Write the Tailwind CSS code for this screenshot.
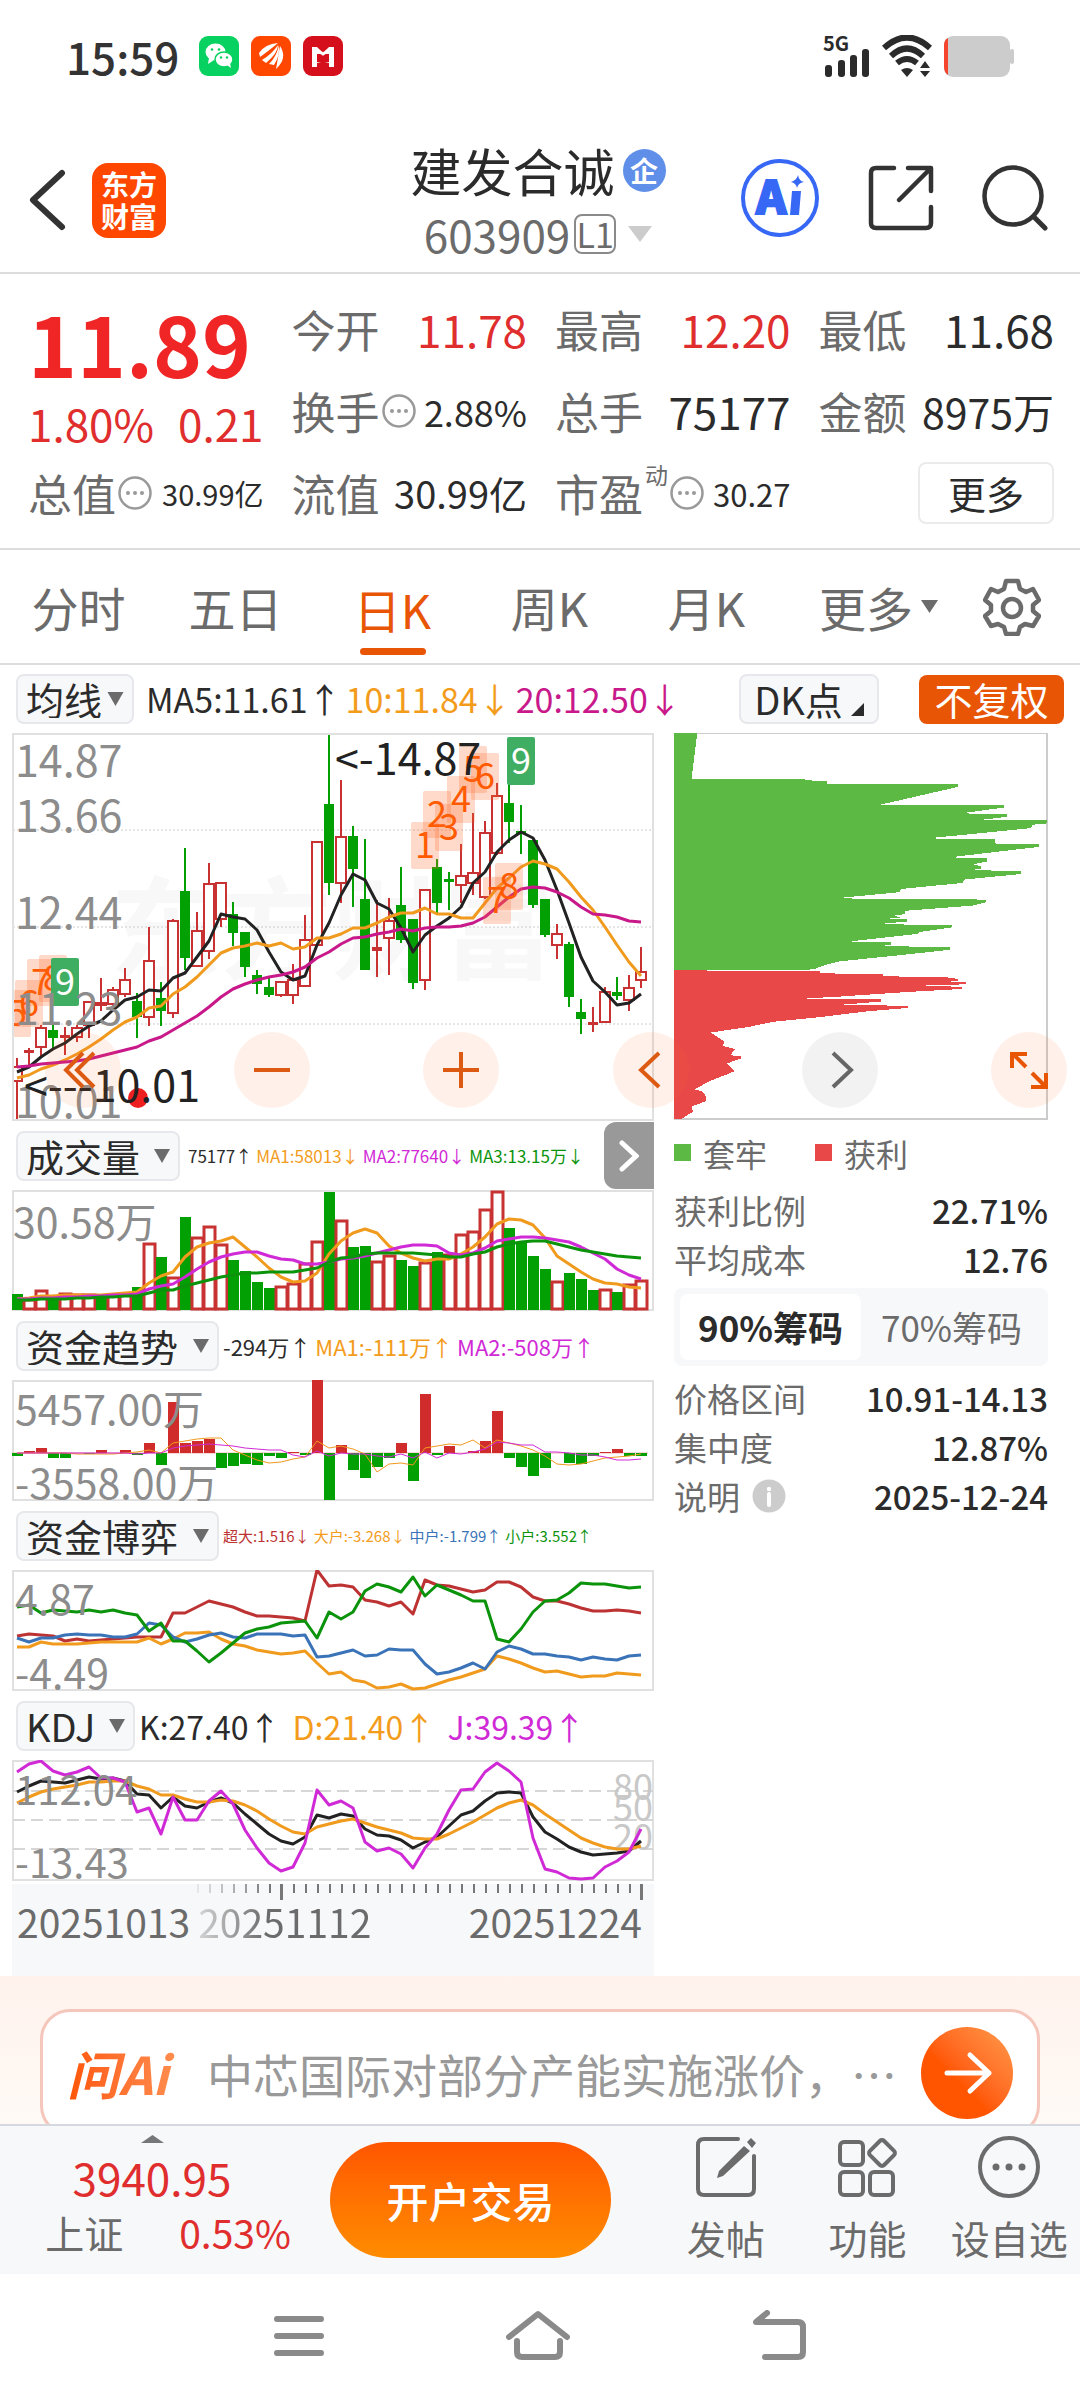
<!DOCTYPE html>
<html lang="zh-CN">
<head>
    <meta charset="UTF-8">
    <meta name="viewport" content="width=device-width, initial-scale=1.0">
    <title>建发合诚 603909</title>
    <script src="https://cdn.jsdelivr.net/npm/@tailwindcss/browser@4"></script>
</head>
<body class="bg-white text-[#2b2b2b] font-['Noto_Sans_CJK_SC',sans-serif] leading-none flex flex-col min-h-screen overflow-x-hidden">

    <!-- Status bar -->
    <div class="flex items-center justify-between h-[112px] px-[66px]">
        <div class="flex items-center gap-3">
            <span class="text-[44px] font-medium mr-2 text-[#333]">15:59</span>
            <svg class="w-10 h-10" viewBox="0 0 40 40">
                <rect width="40" height="40" rx="9" fill="#07d160"/>
                <ellipse cx="16.500" cy="16" rx="10" ry="8.500" fill="#fff"/>
                <path d="M10 22l-1 6 6-4z" fill="#fff"/>
                <ellipse cx="25" cy="23.500" rx="9" ry="7.500" fill="#fff" stroke="#07d160" stroke-width="1.500"/>
                <path d="M28 29l4 3-1-5z" fill="#fff"/>
                <g fill="#07d160"><circle cx="13" cy="13.500" r="1.300"/><circle cx="20" cy="13.500" r="1.300"/><circle cx="22" cy="21.500" r="1.200"/><circle cx="28" cy="21.500" r="1.200"/></g>
            </svg>
            <svg class="w-10 h-10" viewBox="0 0 40 40">
                <rect width="40" height="40" rx="9" fill="#ff4700"/>
                <path d="M8 17Q14 8 27 7 20 13 9 21zM11 24Q21 18 27 9 27 17 15 27zM18 28Q26 20 28 9 29 20 23 29zM25 33Q27 22 29 10 37 22 25 33z" fill="#fff"/>
            </svg>
            <svg class="w-10 h-10" viewBox="0 0 40 40">
                <rect width="40" height="40" rx="9" fill="#d5101c"/>
                <path d="M9 11h5l4 4v11l-4 1v4H9zM31 11h-5l-4 4v11l4 1v4h5z" fill="#fff"/>
                <path d="M14 18v8h12v-8" fill="#d5101c"/>
                <path d="M14 14l6 4 6-4" fill="none" stroke="#fff" stroke-width="3"/>
            </svg>
        </div>
        <div class="flex items-center gap-3">
            <svg class="w-[47px] h-[42px] overflow-visible" viewBox="0 0 47 42">
                <text x="0" y="16" font-size="20" font-weight="700" fill="#2b2b2b">5G</text>
                <g fill="#2b2b2b"><rect x="2" y="30" width="7" height="12" rx="3"/><rect x="15" y="25" width="7" height="17" rx="3"/><rect x="27" y="20" width="7" height="22" rx="3"/><rect x="39" y="14" width="7" height="28" rx="3"/></g>
            </svg>
            <svg class="w-[50px] h-[42px]" viewBox="0 0 50 42">
                <g fill="none" stroke="#2b2b2b" stroke-width="6">
                    <path d="M2 13Q25-8 48 13"/><path d="M9 21Q25 6 41 21"/><path d="M15 28Q25 20 35 28"/>
                </g>
                <path d="M19 35q6-4 12 0l-6 7zM38 33l5-7 5 7zM38 36h10l-5 6z" fill="#2b2b2b"/>
            </svg>
            <svg class="w-[70px] h-[41px]" viewBox="0 0 70 41">
                <rect width="66" height="41" rx="9" fill="#ccc"/><rect x="66" y="13" width="4" height="15" rx="2" fill="#ccc"/>
                <path d="M4 2v37Q0 36 0 31V9Q0 4 4 2z" fill="#f5452f"/>
            </svg>
        </div>
    </div>

    <!-- Title bar -->
    <header class="grid grid-cols-[1fr_auto_1fr] items-center h-[162px] pl-7 pr-8 border-b-2 border-[#dcdcdc]">
        <div class="flex items-center gap-6 pb-3 pt-7">
            <button aria-label="返回">
                <svg class="w-10 h-[62px]" viewBox="0 0 40 62"><path d="M34 4L5 31l29 27" fill="none" stroke="#333" stroke-width="6" stroke-linecap="round" stroke-linejoin="round"/></svg>
            </button>
            <a href="#" class="w-[74px] h-[75px] rounded-2xl bg-[#ff4700] text-white font-bold text-[28px] leading-[32px] text-center pt-[5px]">东方<br>财富</a>
        </div>
        <div class="flex flex-col items-center gap-4 pt-4">
            <div class="flex items-center gap-2">
                <h1 class="text-[51px]">建发合诚</h1>
                <span class="size-[43px] rounded-full bg-[#5f8fe8] text-white font-bold text-[28px] flex items-center justify-center">企</span>
            </div>
            <div class="flex items-center gap-1 text-[44px] text-[#6b6b6b]">
                <span>603909</span>
                <span class="border-2 border-[#8a8a8a] rounded-lg w-[42px] h-10 text-[34px] flex items-center justify-center">L1</span>
                <svg class="w-6 h-4 ml-2" viewBox="0 0 24 16"><path d="M0 0h24L12 16z" fill="#ccc"/></svg>
            </div>
        </div>
        <div class="flex items-center justify-end gap-12 pt-3">
            <a href="#" aria-label="Ai">
                <svg class="size-[80px]" viewBox="0 0 80 80">
                    <circle cx="40" cy="40" r="37" fill="none" stroke="#3768f5" stroke-width="4"/>
                    <text x="16" y="56" font-size="46" font-weight="900" fill="#3768f5" stroke="#3768f5" stroke-width="2">A</text>
                    <path d="M52 33h9l-2 24h-9zM58 17q1 6 6 7-6 1-7 6-1-5-6-6 6-2 7-7z" fill="#3768f5"/>
                </svg>
            </a>
            <button aria-label="分享">
                <svg class="size-[66px]" viewBox="0 0 66 66"><path d="M26 3H8Q3 3 3 8v50q0 5 5 5h50q5 0 5-5V42M40 3h23v23M62 4L31 35" fill="none" stroke="#333" stroke-width="4.500" stroke-linecap="round" stroke-linejoin="round"/></svg>
            </button>
            <button aria-label="搜索">
                <svg class="size-[66px]" viewBox="0 0 66 66"><circle cx="31" cy="31" r="28.500" fill="none" stroke="#333" stroke-width="4.500"/><path d="M52 52l11 11" stroke="#333" stroke-width="5" stroke-linecap="round"/></svg>
            </button>
        </div>
    </header>

    <!-- Quote -->
    <section class="grid grid-cols-4 auto-rows-[82px] gap-x-7 pl-7 pr-[26px] pt-[14px] pb-[14px] border-b-2 border-[#dcdcdc] text-[44px] text-[#6b6b6b]">
        <div class="row-span-2 text-[#e02d2d]">
            <div class="h-[108px] flex items-center text-[83px] font-bold text-[#f02626]">11.89</div>
            <div class="h-[54px] flex items-center justify-between"><span>1.80%</span><span>0.21</span></div>
        </div>
        <div class="flex items-center justify-between">今开<span class="text-[#e02d2d]">11.78</span></div>
        <div class="flex items-center justify-between">最高<span class="text-[#e02d2d]">12.20</span></div>
        <div class="flex items-center justify-between">最低<span class="text-[#2b2b2b]">11.68</span></div>
        <div class="flex items-center justify-between whitespace-nowrap">
            <span class="flex items-center gap-[2px]">换手<svg class="size-[34px]" viewBox="0 0 34 34"><use href="#dots"/></svg></span>
            <span class="text-[36px] text-[#2b2b2b]">2.88%</span>
        </div>
        <div class="flex items-center justify-between">总手<span class="text-[#2b2b2b]">75177</span></div>
        <div class="flex items-center justify-between">金额<span class="text-[41px] text-[#2b2b2b]">8975万</span></div>
        <div class="flex items-center justify-between whitespace-nowrap">
            <span class="flex items-center gap-[2px]">总值<svg class="size-[34px]" viewBox="0 0 34 34"><use href="#dots"/></svg></span>
            <span class="text-[29px] text-[#2b2b2b]">30.99亿</span>
        </div>
        <div class="flex items-center justify-between">流值<span class="text-[38px] text-[#2b2b2b]">30.99亿</span></div>
        <div class="flex items-center justify-between whitespace-nowrap">
            <span class="flex items-center gap-[2px]">市盈<span class="text-[23px] self-start -mt-2">动</span><svg class="size-[34px]" viewBox="0 0 34 34"><use href="#dots"/></svg></span>
            <span class="text-[31px] text-[#2b2b2b]">30.27</span>
        </div>
        <div class="flex items-center justify-end">
            <button class="w-[136px] h-[62px] border-2 border-[#ebebeb] rounded-lg text-[38px] text-[#2b2b2b]">更多</button>
        </div>
    </section>

    <!-- Period tabs -->
    <nav class="grid grid-cols-[repeat(5,157fr)_187fr_80fr] h-[115px] pr-7 border-b-2 border-[#dcdcdc] text-[47px] text-[#6b6b6b]">
        <a href="#" class="flex items-center justify-center">分时</a>
        <a href="#" class="flex items-center justify-center">五日</a>
        <a href="#" class="flex flex-col items-center justify-end gap-4 pb-2 text-[#e85505]">日K<span class="w-[66px] h-[7px] rounded-full bg-[#e85505]"></span></a>
        <a href="#" class="flex items-center justify-center">周K</a>
        <a href="#" class="flex items-center justify-center">月K</a>
        <button class="flex items-center justify-center gap-2">更多<svg class="w-[17px] h-[13px]" viewBox="0 0 17 13"><path d="M0 0h17L8.500 13z" fill="#6b6b6b"/></svg></button>
        <button class="flex items-center justify-center" aria-label="设置">
            <svg class="size-[58px]" viewBox="0 0 58 58" fill="none" stroke="#6b6b6b" stroke-width="4.500" stroke-linejoin="round">
                <path d="M23 3h12l2 8 6 3 7-3 6 11-6 5v6l6 5-6 10-8-2-5 3-2 7H23l-2-7-6-3-7 2-6-10 6-5v-6l-6-5 6-11 7 3 6-3z"/><circle cx="29" cy="30" r="9"/>
            </svg>
        </button>
    </nav>

    <!-- Indicator toolbar -->
    <div class="flex items-center justify-between h-[68px] px-4">
        <div class="flex items-center text-[34px] whitespace-nowrap">
            <label class="flex items-center h-[50px] w-[118px] pl-2 border-2 border-[#e6e8ec] rounded-lg bg-[#f7f8fa] mr-3">
                <select class="appearance-none text-[38px]" aria-label="主图指标"><option>均线</option></select>
                <svg class="w-[17px] h-[14px] ml-1" viewBox="0 0 16 14"><path d="M0 0h16L8 14z" fill="#6b6b6b"/></svg>
            </label>
            <span class="mr-1">MA5:11.61↑</span>
            <span class="mr-1 text-[#f39c1c]">10:11.84↓</span>
            <span class="text-[#c8188a]">20:12.50↓</span>
        </div>
        <div class="flex items-center gap-10">
            <button class="flex items-center justify-center gap-2 w-[140px] h-[50px] border-2 border-[#e6e8ec] rounded-lg bg-[#f7f8fa] text-[38px]">DK点<svg class="w-[13px] h-[13px] mt-5" viewBox="0 0 13 13"><path d="M13 0v13H0z" fill="#2b2b2b"/></svg></button>
            <button class="w-[145px] h-[49px] rounded-lg bg-[#e85505] text-white text-[38px]">不复权</button>
        </div>
    </div>

    <!-- Charts -->
    <main class="relative grid grid-cols-[minmax(0,642fr)_minmax(0,374fr)] gap-x-5 pl-3 pr-8">
        <div>
            <svg id="kline" class="block w-full" viewBox="0 0 642 388"></svg>

            <div class="flex items-center justify-between h-[69px]">
                <div class="flex items-center gap-2 pl-1 whitespace-nowrap">
                    <label class="flex items-center justify-between h-[50px] w-[164px] px-2 border-2 border-[#e6e8ec] rounded-lg bg-[#f7f8fa]">
                        <select class="appearance-none text-[38px]" aria-label="副图一"><option>成交量</option></select>
                        <svg class="w-4 h-[14px]" viewBox="0 0 16 14"><path d="M0 0h16L8 14z" fill="#6b6b6b"/></svg>
                    </label>
                    <p class="flex gap-1 text-[17px]">
                        <span>75177↑</span><span class="text-[#f39c1c]">MA1:58013↓</span><span class="text-[#d02ad6]">MA2:77640↓</span><span class="text-[#0c930c]">MA3:13.15万↓</span>
                    </p>
                </div>
                <button class="shrink-0 w-[50px] h-[67px] rounded-l-xl bg-[#999] flex items-center justify-center" aria-label="展开">
                    <svg class="w-5 h-8" viewBox="0 0 20 32"><path d="M3 3l14 13L3 29" fill="none" stroke="#fff" stroke-width="5" stroke-linecap="round"/></svg>
                </button>
            </div>
            <svg id="volume" class="block w-full" viewBox="0 0 642 121"></svg>

            <div class="flex items-center gap-1 pl-1 h-[69px] whitespace-nowrap">
                <label class="flex items-center justify-between h-[50px] w-[203px] px-2 border-2 border-[#e6e8ec] rounded-lg bg-[#f7f8fa]">
                    <select class="appearance-none text-[38px]" aria-label="副图二"><option>资金趋势</option></select>
                    <svg class="w-4 h-[14px]" viewBox="0 0 16 14"><path d="M0 0h16L8 14z" fill="#6b6b6b"/></svg>
                </label>
                <p class="flex gap-1 text-[22px]">
                    <span>-294万↑</span><span class="text-[#f39c1c]">MA1:-111万↑</span><span class="text-[#d02ad6]">MA2:-508万↑</span>
                </p>
            </div>
            <svg id="trend" class="block w-full" viewBox="0 0 642 121"></svg>

            <div class="flex items-center gap-1 pl-1 h-[69px] whitespace-nowrap">
                <label class="flex items-center justify-between h-[50px] w-[203px] px-2 border-2 border-[#e6e8ec] rounded-lg bg-[#f7f8fa]">
                    <select class="appearance-none text-[38px]" aria-label="副图三"><option>资金博弈</option></select>
                    <svg class="w-4 h-[14px]" viewBox="0 0 16 14"><path d="M0 0h16L8 14z" fill="#6b6b6b"/></svg>
                </label>
                <p class="flex gap-1 text-[15px]">
                    <span class="text-[#bd3333]">超大:1.516↓</span><span class="text-[#f39c1c]">大户:-3.268↓</span><span class="text-[#3a73b8]">中户:-1.799↑</span><span class="text-[#0c930c]">小户:3.552↑</span>
                </p>
            </div>
            <svg id="game" class="block w-full" viewBox="0 0 642 121"></svg>

            <div class="flex items-center gap-1 pl-1 h-[69px] whitespace-nowrap">
                <label class="flex items-center justify-between h-[50px] w-[119px] px-2 border-2 border-[#e6e8ec] rounded-lg bg-[#f7f8fa]">
                    <select class="appearance-none text-[38px]" aria-label="副图四"><option>KDJ</option></select>
                    <svg class="w-4 h-[14px]" viewBox="0 0 16 14"><path d="M0 0h16L8 14z" fill="#6b6b6b"/></svg>
                </label>
                <p class="flex gap-3 text-[32px]">
                    <span>K:27.40↑</span><span class="text-[#f39c1c]">D:21.40↑</span><span class="text-[#d02ad6]">J:39.39↑</span>
                </p>
            </div>
            <svg id="kdj" class="block w-full" viewBox="0 0 642 121"></svg>

            <!-- Time axis -->
            <div class="mt-[3px] h-[92px] bg-[#f7f8fa]">
                <svg id="ticks" class="block w-full" viewBox="0 0 642 18"></svg>
                <div class="flex gap-2 pl-[5px] pr-3 text-[39px] text-[#6b6b6b]">
                    <span>20251013</span>
                    <span class="bg-linear-to-r from-[#d5d5d5] to-[#6b6b6b] to-40% bg-clip-text text-transparent">20251112</span>
                    <span class="ml-auto">20251224</span>
                </div>
            </div>
        </div>

        <!-- Chip distribution -->
        <aside>
            <svg class="block w-full" viewBox="103 221 1125 1164" shape-rendering="crispEdges">
                <rect x="104" y="223" width="1121" height="1159" fill="#fff" stroke="#ccc" stroke-width="4"/>
                <polygon id="chip-loss" fill="#5cb944"/>
                <polygon id="chip-gain" fill="#e84848"/>
            </svg>
            <div class="flex items-center gap-3 h-[66px] text-[32px] text-[#6b6b6b]">
                <span class="size-[17px] bg-[#5cb944]"></span>套牢
                <span class="size-[17px] bg-[#e84848] ml-9"></span>获利
            </div>
            <dl class="grid grid-cols-[auto_1fr] auto-rows-[49px] items-center text-[33px] text-[#6b6b6b]">
                <dt>获利比例</dt><dd class="text-right font-medium text-[#2b2b2b]">22.71%</dd>
                <dt>平均成本</dt><dd class="text-right font-medium text-[#2b2b2b]">12.76</dd>
            </dl>
            <div class="flex h-[78px] mt-1 mb-2 p-[6px] rounded-lg bg-[#f7f8fa] text-[35px] whitespace-nowrap">
                <button class="w-1/2 rounded-lg bg-white font-bold">90%筹码</button>
                <button class="w-1/2 text-[#6b6b6b]">70%筹码</button>
            </div>
            <dl class="grid grid-cols-[auto_1fr] auto-rows-[49px] items-center text-[33px] text-[#6b6b6b] whitespace-nowrap">
                <dt>价格区间</dt><dd class="text-right font-medium text-[#2b2b2b]">10.91-14.13</dd>
                <dt>集中度</dt><dd class="text-right font-medium text-[#2b2b2b]">12.87%</dd>
                <dt class="flex items-center gap-3">说明<svg class="size-[34px]" viewBox="0 0 34 34"><circle cx="17" cy="17" r="16.500" fill="#ccc"/><circle cx="17" cy="10" r="2.200" fill="#fff"/><path d="M17 15v11" stroke="#fff" stroke-width="4" stroke-linecap="round"/></svg></dt>
                <dd class="text-right font-medium text-[#2b2b2b]">2025-12-24</dd>
            </dl>
        </aside>

        <!-- Floating chart controls -->
        <div class="absolute left-[45px] right-[13px] top-[299px] flex justify-between">
            <button class="size-[76px] rounded-full bg-[#ff6a20]/10" aria-label="最左"><svg viewBox="0 0 76 76" fill="none" stroke="#dd5a12" stroke-width="4"><path d="M38 21L21 38l17 17M49 21L32 38l17 17"/></svg></button>
            <button class="size-[76px] rounded-full bg-[#ff6a20]/10" aria-label="缩小"><svg viewBox="0 0 76 76" fill="none" stroke="#dd5a12" stroke-width="4"><path d="M20 38h36"/></svg></button>
            <button class="size-[76px] rounded-full bg-[#ff6a20]/10" aria-label="放大"><svg viewBox="0 0 76 76" fill="none" stroke="#dd5a12" stroke-width="4"><path d="M20 38h36M38 20v36"/></svg></button>
            <button class="size-[76px] rounded-full bg-[#ff6a20]/10" aria-label="左移"><svg viewBox="0 0 76 76" fill="none" stroke="#dd5a12" stroke-width="4"><path d="M46 21L28 38l18 17"/></svg></button>
            <button class="size-[76px] rounded-full bg-black/5" aria-label="右移"><svg viewBox="0 0 76 76" fill="none" stroke="#666" stroke-width="4"><path d="M31 21l18 17-18 17"/></svg></button>
            <button class="size-[76px] rounded-full bg-[#ff6a20]/10" aria-label="全屏"><svg viewBox="0 0 76 76" fill="none" stroke="#e85505" stroke-width="4"><path d="M21 36V22h15M22 22l13 13M55 41v14H40M54 54L41 41"/></svg></button>
        </div>
    </main>

    <!-- Ask Ai -->
    <section class="h-[148px] overflow-hidden bg-linear-to-b from-[#fff2ec] to-[#fffaf6] px-10 pt-[33px]">
        <form class="flex items-center h-[127px] rounded-[30px] border-[3px] border-[#f5c6bb] border-b-[#dfe3f2] bg-white px-6">
            <span class="w-[116px] mr-6 text-[52px] font-bold italic whitespace-nowrap bg-linear-to-r from-[#ff5500] to-[#ff9050] bg-clip-text text-transparent leading-[64px]">问Ai</span>
            <input class="flex-1 min-w-0 h-16 text-[46px] placeholder:text-[#999] outline-none" type="text" aria-label="问Ai" placeholder="中芯国际对部分产能实施涨价，…">
            <button class="size-[92px] shrink-0 rounded-full bg-linear-to-tr from-[#ff5500] from-40% to-[#ff9a4a]" aria-label="发送">
                <svg viewBox="0 0 92 92"><path d="M26 46h42M49 28l19 18-19 18" fill="none" stroke="#fff" stroke-width="5" stroke-linecap="round" stroke-linejoin="round"/></svg>
            </button>
        </form>
    </section>

    <!-- Bottom bar -->
    <footer class="flex items-center h-[150px] border-t-2 border-[#d5d8de] bg-[#f7f8fa] text-[39px] text-[#6b6b6b]">
        <a href="#" class="flex flex-col items-center w-[304px] shrink-0 h-full pt-[9px]">
            <svg class="w-[23px] h-2" viewBox="0 0 23 8"><path d="M0 8h23L11.500 0z" fill="#777"/></svg>
            <span class="text-[44px] text-[#e02d2d] mt-3">3940.95</span>
            <span class="flex gap-14 mt-[14px] pl-8">上证<span class="text-[#e02d2d]">0.53%</span></span>
        </a>
        <button class="w-[281px] h-[116px] ml-[26px] rounded-full bg-linear-to-b from-[#ff5500] to-[#ff8c00] text-white text-[42px] font-medium">开户交易</button>
        <div class="flex-1 grid grid-cols-3 ml-11 pb-2">
            <a href="#" class="flex flex-col items-center gap-5">
                <svg class="size-[62px]" viewBox="0 0 62 62" fill="none" stroke="#6b6b6b" stroke-width="4"><path d="M43 3H9Q3 3 3 9v44q0 6 6 6h44q6 0 6-6V20" stroke-linecap="round"/><path d="M49 10l6 5-27 25-6 2 2-7zM52 6l4-4 5 5-4 5z" fill="#6b6b6b" stroke="none"/></svg>
                发帖
            </a>
            <a href="#" class="flex flex-col items-center gap-5">
                <svg class="size-[62px]" viewBox="0 0 62 62" fill="none" stroke="#6b6b6b" stroke-width="4"><rect x="4" y="6" width="23" height="23" rx="4"/><rect x="4" y="36" width="23" height="23" rx="4"/><rect x="34" y="36" width="23" height="23" rx="4"/><rect x="36" y="7" width="20" height="20" rx="3" transform="rotate(45 46 17)"/></svg>
                功能
            </a>
            <a href="#" class="flex flex-col items-center gap-5 whitespace-nowrap">
                <svg class="size-[62px]" viewBox="0 0 62 62"><circle cx="31" cy="31" r="29" fill="none" stroke="#6b6b6b" stroke-width="4"/><g fill="#6b6b6b"><circle cx="18" cy="31" r="3.500"/><circle cx="31" cy="31" r="3.500"/><circle cx="44" cy="31" r="3.500"/></g></svg>
                设自选
            </a>
        </div>
    </footer>

    <!-- System navigation -->
    <div class="flex items-center justify-center h-[126px] pb-1 gap-[182px]">
        <button aria-label="最近任务"><svg class="w-[50px] h-[48px]" viewBox="0 0 50 48"><path d="M3 8h44M3 25h44M3 42h44" stroke="#8a8a8a" stroke-width="6" stroke-linecap="round"/></svg></button>
        <button aria-label="主页"><svg class="w-[64px] h-[50px]" viewBox="0 0 64 50" fill="none" stroke="#8a8a8a" stroke-width="6" stroke-linecap="round" stroke-linejoin="round"><path d="M3 27L32 4l29 23M11 31v11q0 5 5 5h33q5 0 5-5V31"/></svg></button>
        <button aria-label="返回上一级"><svg class="w-[54px] h-[50px]" viewBox="0 0 54 50" fill="none" stroke="#8a8a8a" stroke-width="6" stroke-linecap="round" stroke-linejoin="round"><path d="M13 47h33q5 0 5-5V17q0-5-5-5H4l11-9"/></svg></button>
    </div>

    <!-- Shared "more info" glyph -->
    <svg class="hidden">
        <symbol id="dots" viewBox="0 0 34 34"><circle cx="17" cy="17" r="15.500" fill="none" stroke="#999" stroke-width="2.500"/><g fill="#999"><circle cx="10" cy="17" r="2"/><circle cx="17" cy="17" r="2"/><circle cx="24" cy="17" r="2"/></g></symbol>
    </svg>

    <script>
        const RED = "#c83232", GREEN = "#02a002", BLACK = "#222", ORANGE = "#f09a1e", MAGENTA = "#c8188a", VIOLET = "#d02ad6", BLUE = "#3a73b8";
        const STEP = 12, X0 = 5;
        const x = i => X0 + i * STEP;
        const frame = h => `<rect x="1" y="1" width="640" height="${h - 2}" fill="none" stroke="#e0e0e0" stroke-width="2"/>`;
        const line = (ys, color, w = 3) => `<polyline fill="none" stroke="${color}" stroke-width="${w}" stroke-linejoin="round" points="${ys.map((y, i) => x(i) + "," + y).join(" ")}"/>`;
        const label = (t, lx, ly, size = 41, color = "#8c8c8c") => `<text x="${lx}" y="${ly}" font-size="${size}" fill="${color}">${t}</text>`;

        // colour, high, body top, body bottom, low (chart pixels); "d" is a filled red body
        const candles = [
            ["r",325,333,348,387],["d",315,317,320,332],["r",292,294,314,324],["g",290,297,305,317],["d",294,302,305,322],["r",292,294,304,309],
            ["r",268,268,292,305],["r",245,269,272,278],["r",254,256,271,276],["r",235,246,261,264],["g",260,268,284,305],["r",194,227,284,293],
            ["g",249,265,278,293],["r",186,187,280,285],["g",115,158,225,237],["r",179,197,233,233],["r",130,150,218,226],["r",149,149,186,194],
            ["g",169,181,200,213],["g",199,199,234,244],["g",237,242,251,261],["g",244,254,262,264],["r",248,248,262,264],["r",231,246,262,271],
            ["r",182,206,253,254],["r",108,108,212,212],["g",0,71,150,162],["r",47,103,150,170],["g",93,103,136,174],["g",106,166,237,237],
            ["d",167,214,218,244],["r",165,187,205,242],["g",134,172,207,210],["g",186,186,250,256],["r",156,156,247,257],["g",126,134,170,180],
            ["g",139,146,149,177],["r",111,142,152,170],["r",80,139,150,162],["r",88,99,164,166],["r",50,62,120,122],["g",47,70,89,110],
            ["g",72,98,100,121],["g",107,107,172,175],["g",166,166,202,204],["r",191,200,212,226],["g",209,211,264,274],["g",266,279,286,301],
            ["d",274,289,290,299],["r",254,258,289,289],["g",244,259,263,267],["r",242,254,267,278],["r",214,238,247,255]
        ];
        const ma5 = [339,334,324,316,310,301,293,288,277,267,264,257,258,245,240,224,208,181,184,186,197,219,239,247,243,212,190,162,141,147,170,176,195,219,202,193,185,174,150,139,119,107,99,105,127,157,190,224,248,259,272,270,261];
        const ma10 = [345,342,336,332,327,321,314,306,297,289,284,275,273,261,254,244,232,220,215,213,210,213,210,216,214,205,205,201,195,195,190,184,180,180,175,181,181,185,185,170,155,145,134,128,131,136,149,164,177,194,212,229,243];
        const ma20 = [334,333,331,330,329,328,326,323,320,317,314,308,304,297,290,283,274,264,256,251,247,244,242,239,234,225,219,211,205,204,201,199,196,198,195,194,194,193,190,184,174,164,156,154,155,159,165,174,181,182,184,188,189];

        const candle = ([c, hi, top, bot, lo], i) => {
            const cx = x(i), col = c === "g" ? GREEN : RED, h = Math.max(bot - top, 3);
            const body = c === "r"
                ? `<rect x="${cx - 5}" y="${top + 1}" width="10" height="${Math.max(h - 1, 2)}" fill="#fff" stroke="${col}" stroke-width="2"/>`
                : `<rect x="${cx - 5}" y="${top}" width="10" height="${h}" fill="${col}"/>`;
            return `<rect x="${cx - 1}" y="${hi}" width="2" height="${Math.max(lo - hi, 1)}" fill="${col}"/>` + body;
        };
        const mark = ([n, mx, my]) => `<rect x="${mx}" y="${my}" width="28" height="47" rx="2" fill="#ff6a2a" fill-opacity=".25"/><text x="${mx + 14}" y="${my + 36}" font-size="36" text-anchor="middle" fill="#ff5a00">${n}</text>`;
        const nine = (mx, my) => `<rect x="${mx}" y="${my}" width="28" height="48" rx="2" fill="#3fae62"/><text x="${mx + 14}" y="${my + 37}" font-size="36" text-anchor="middle" fill="#fff">9</text>`;
        const marks = [[5,-9,257],[6,3,247],[7,15,226],[8,27,222],[1,399,89],[2,411,58],[3,423,71],[4,435,43],[5,447,13],[6,459,20],[7,471,144],[8,483,130]];

        document.getElementById("kline").innerHTML =
            `<text x="98" y="238" font-size="111" font-weight="700" fill="#f8f8f8">东方财富</text>` +
            [97, 194, 291].map(y => `<path d="M1 ${y}h640" stroke="#ccc" stroke-dasharray="2 2"/>`).join("") +
            candles.map(candle).join("") +
            line(ma5, BLACK) + line(ma10, ORANGE) + line(ma20, MAGENTA) +
            marks.map(mark).join("") + nine(39, 225) + nine(495, 4) +
            `<circle cx="126" cy="365" r="10" fill="#ef2020"/>` +
            label("14.87", 3, 44, 43) + label("13.66", 3, 99, 43) + label("12.44", 3, 196, 43) + label("11.23", 3, 292, 43) + label("10.01", 3, 385, 43) +
            label("&lt;-14.87", 323, 42, 43, BLACK) + label("&lt;---10.01", 12, 369, 43, BLACK) + frame(388);

        const volTop = [104,109,100,108,103,104,104,105,104,103,97,53,67,87,27,47,36,54,70,81,92,98,96,93,73,51,2,30,57,56,71,65,70,76,72,62,64,44,41,19,1,38,52,66,79,91,83,89,100,99,102,94,90];
        const volCol = "grrgrrrgrrgrgrgrrrggggrrrrgrggrrggrgrrrrrggggrgggrgrr";
        const volMa1 = [109,108,106,106,105,105,105,105,104,103,102,93,86,82,67,57,53,51,47,57,67,78,87,92,91,83,64,51,43,39,43,56,63,68,71,69,69,64,57,47,34,29,30,35,48,66,74,82,89,93,94,97,98];
        const volMa2 = [109,109,108,108,107,107,106,106,105,105,104,99,96,94,87,79,72,67,64,62,62,66,69,70,74,74,72,69,68,66,63,60,57,55,55,56,63,65,63,58,51,49,47,47,48,50,52,57,63,69,79,85,89];
        const volMa3 = [110,110,109,109,109,108,108,107,107,106,106,103,100,100,96,93,90,87,85,83,83,82,82,82,80,78,72,68,67,64,63,63,63,63,64,65,67,67,64,62,57,54,52,51,51,54,57,60,62,64,66,67,68];
        document.getElementById("volume").innerHTML = frame(121) +
            volTop.map((t, i) => volCol[i] === "g"
                ? `<rect x="${x(i) - 5}" y="${t}" width="11" height="${120 - t}" fill="${GREEN}"/>`
                : `<rect x="${x(i) - 5}" y="${t + 1}" width="11" height="${118 - t}" fill="#fff" stroke="${RED}" stroke-width="3"/>`).join("") +
            line(volMa1, ORANGE) + line(volMa2, VIOLET) + line(volMa3, "#0c930c") + label("30.58万", 1, 48);

        const flow = [3,-2,-5,5,5,0,1,-3,0,-3,2,-10,12,-51,-10,-12,-14,15,13,11,12,3,5,-1,2,-73,47,-8,17,25,14,5,-10,28,-59,2,-7,0,-2,-12,-42,5,14,23,15,0,10,11,3,-1,-4,3,3];
        const flowMa1 = [73,73,73,73,73,74,74,74,74,73,72,70,73,63,61,59,58,58,70,75,80,83,82,79,77,61,68,66,69,74,92,84,83,85,68,66,64,65,60,68,60,63,66,70,76,84,85,84,81,78,77,76,74];
        const flowMa2 = [73,73,73,73,73,73,73,73,73,73,74,73,73,68,66,65,64,65,66,68,69,70,70,75,77,71,76,73,74,74,76,77,74,78,72,78,73,74,72,69,62,63,65,65,72,72,73,75,75,77,80,80,79];
        document.getElementById("trend").innerHTML = frame(121) + `<path d="M1 73h635" stroke="#f3b0b0"/>` +
            flow.map((v, i) => `<rect x="${x(i) - 5}" y="${v < 0 ? 73 + v : 73}" width="11" height="${Math.abs(v)}" fill="${v < 0 ? "#d02c2c" : GREEN}"/>`).join("") +
            line(flowMa1, ORANGE, 1) + line(flowMa2, VIOLET, 1) + label("5457.00万", 3, 45) + label("-3558.00万", 3, 119);

        const big = [66,64,65,66,71,69,71,70,69,68,67,67,67,43,43,37,31,34,37,42,46,46,47,48,51,0,16,15,17,30,32,36,32,44,10,15,16,19,22,20,12,12,17,27,31,31,34,38,41,41,40,41,43];
        const small = [37,35,43,40,41,42,40,42,40,43,45,61,53,71,71,81,92,83,73,63,59,57,53,52,51,68,42,49,42,21,14,17,22,7,26,15,20,25,31,31,69,72,59,42,31,30,23,13,14,14,16,18,17];
        const mid = [68,72,68,68,65,64,65,65,67,67,64,53,55,67,72,69,65,63,67,68,64,64,64,66,65,87,86,83,80,86,85,79,80,80,94,104,102,98,93,99,82,76,79,84,84,86,87,90,87,89,90,86,85];
        const large = [77,77,72,74,74,74,73,72,72,72,72,68,74,69,63,63,62,69,74,76,80,82,84,83,81,93,104,102,110,112,118,117,114,119,118,114,110,107,103,99,86,89,93,98,102,101,104,107,106,106,103,104,105];
        document.getElementById("game").innerHTML = frame(121) +
            line(big, "#bd3333") + line(large, ORANGE) + line(mid, BLUE) + line(small, "#0c930c") + label("4.87", 3, 45) + label("-4.49", 3, 119);

        const k = [32,26,21,22,23,20,17,19,18,21,34,35,48,37,46,48,42,38,43,54,64,74,81,84,77,55,58,54,56,69,75,76,80,88,82,77,66,55,51,41,33,32,33,57,72,79,87,92,95,94,93,91,81];
        const d = [43,37,32,29,27,25,22,22,21,21,26,29,35,35,39,42,42,40,41,45,51,59,66,72,74,67,64,61,59,63,67,70,73,78,79,79,74,68,62,55,48,43,40,45,54,62,70,78,83,87,89,89,86];
        const j = [12,4,1,11,15,12,7,18,18,22,52,48,74,37,60,60,41,31,44,70,88,103,111,107,83,30,45,41,48,82,91,88,94,108,88,74,50,30,29,12,3,11,22,78,109,112,118,119,118,107,101,92,69];
        document.getElementById("kdj").innerHTML = frame(121) +
            [31, 60, 89].map(y => `<path d="M1 ${y}h640" stroke="#d6d6d6" stroke-width="2" stroke-dasharray="12 6"/>`).join("") +
            label("80", 601, 40, 36, "#c8c8c8") + label("50", 601, 61, 36, "#c8c8c8") + label("20", 601, 90, 36, "#c8c8c8") +
            line(k, BLACK) + line(d, ORANGE) + line(j, VIOLET) + label("112.04", 3, 45, 40) + label("-13.43", 3, 118, 40);

        document.getElementById("ticks").innerHTML = Array.from({ length: 38 }, (_, n) => n + 15).map(i => {
            const major = i === 22 || i === 52;
            return `<rect x="${x(i) - (major ? 1 : 0)}" y="0" width="${major ? 3 : 2}" height="${major ? 16 : 9}" fill="#777" opacity="${Math.min(1, (i - 14) / 7)}"/>`;
        }).join("");

        document.getElementById("chip-loss").setAttribute("points", "103,222 173,222 156,358 498,358 498,363 564,366 564,374 958,374 958,383 735,434 720,437 1097,437 1097,445 965,463 1105,464 1105,473 1030,482 1224,484 1224,493 1180,497 1178,507 866,538 1068,541 1071,555 1200,556 1200,564 1145,570 933,595 1046,598 1046,607 1003,616 1026,622 1026,630 993,633 1148,637 1148,645 975,662 973,672 838,685 788,690 780,700 613,716 648,720 1041,722 1041,730 1003,740 798,756 798,766 766,769 782,776 750,779 805,780 805,788 715,796 938,799 938,806 840,820 838,825 630,848 757,851 757,858 722,862 933,865 933,873 805,887 600,908 560,918 525,931 492,935 103,935");
        document.getElementById("chip-gain").setAttribute("points", "103,935 543,937 543,944 732,946 732,953 915,955 958,961 958,966 890,967 980,970 980,977 816,982 968,984 968,991 808,1000 599,1014 527,1018 474,1022 725,1022 725,1029 625,1037 577,1040 807,1041 807,1048 686,1058 548,1075 400,1090 323,1106 213,1122 255,1150 250,1162 287,1172 272,1190 305,1194 305,1200 262,1215 285,1238 270,1245 210,1268 165,1293 190,1300 200,1315 200,1328 155,1345 160,1360 125,1382 103,1382");
    </script>

</body>
</html>
